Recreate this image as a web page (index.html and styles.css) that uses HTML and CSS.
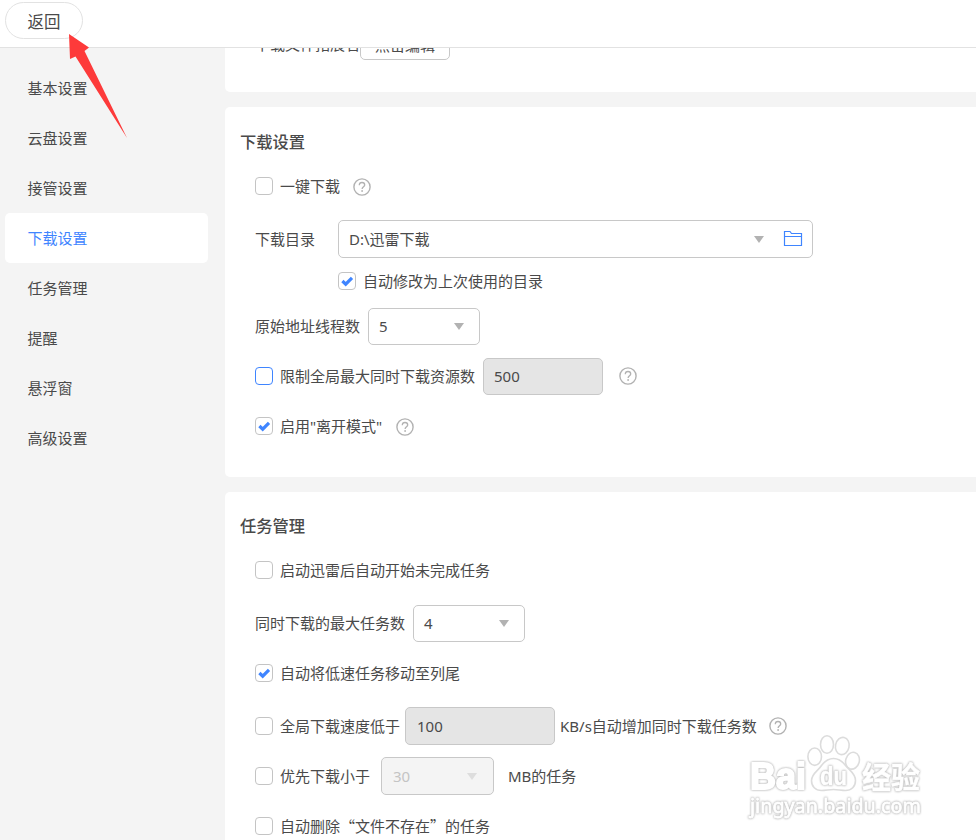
FILE: index.html
```html
<!DOCTYPE html>
<html lang="zh-CN">
<head>
    <meta charset="UTF-8">
    <meta name="viewport" content="width=device-width, initial-scale=1.0">
    <title>下载设置</title>
    <link rel="stylesheet" href="styles.css">
</head>
<body>
    <!-- Shared icons -->
    <svg class="icon-defs">
        <symbol id="help" viewBox="0 0 18 18">
            <circle cx="9" cy="9" r="8.1" fill="none" stroke="#b2b2b2" stroke-width="1.4"/>
            <path d="M6.300 7.300C6.300 5.400 7.400 4.500 9 4.500s2.700.9 2.700 2.400c0 1.700-2.600 1.900-2.600 4" fill="none" stroke="#b2b2b2" stroke-width="1.300"/>
            <circle cx="9.100" cy="13" r=".9" fill="#b2b2b2"/>
        </symbol>
        <symbol id="check" viewBox="0 0 16 16">
            <path d="M3.400 8l3.300 3.200 6.300-6.400" fill="none" stroke="#3f85ff" stroke-width="3.200"/>
        </symbol>
    </svg>

    <header class="header">
        <button class="back">返回</button>
    </header>

    <div class="page">
        <nav class="sidebar">
            <a class="nav-item">基本设置</a>
            <a class="nav-item">云盘设置</a>
            <a class="nav-item">接管设置</a>
            <a class="nav-item active">下载设置</a>
            <a class="nav-item">任务管理</a>
            <a class="nav-item">提醒</a>
            <a class="nav-item">悬浮窗</a>
            <a class="nav-item">高级设置</a>
        </nav>

        <main class="content">
            <section class="card card-scrolled">
                <span>下载文件拓展名</span>
                <button class="edit">点击编辑</button>
            </section>

            <section class="card">
                <h2>下载设置</h2>
                <div class="row row-first">
                    <span class="checkbox"></span>
                    <span class="label">一键下载</span>
                    <svg class="help"><use href="#help"/></svg>
                </div>
                <div class="row row-dir">
                    <span>下载目录</span>
                    <div class="field field-dir">
                        <span>D:\迅雷下载</span>
                        <i class="caret"></i>
                        <svg class="folder" viewBox="0 0 20 18">
                            <path d="M1.500 15.500v-14h5.500l1.500 2h10v12zM1.500 6.500h17" fill="none" stroke="#3f85ff" stroke-width="1.200"/>
                        </svg>
                    </div>
                </div>
                <div class="row row-sub">
                    <span class="checkbox"><svg><use href="#check"/></svg></span>
                    <span class="label">自动修改为上次使用的目录</span>
                </div>
                <div class="row row-threads">
                    <span>原始地址线程数</span>
                    <div class="field select"><span>5</span><i class="caret"></i></div>
                </div>
                <div class="row">
                    <span class="checkbox focus"></span>
                    <span class="label">限制全局最大同时下载资源数</span>
                    <div class="field disabled"><span>500</span></div>
                    <svg class="help help-field"><use href="#help"/></svg>
                </div>
                <div class="row">
                    <span class="checkbox"><svg><use href="#check"/></svg></span>
                    <span class="label">启用"离开模式"</span>
                    <svg class="help help-away"><use href="#help"/></svg>
                </div>
            </section>

            <section class="card card-tasks">
                <h2>任务管理</h2>
                <div class="row row-first">
                    <span class="checkbox"></span>
                    <span class="label">启动迅雷后自动开始未完成任务</span>
                </div>
                <div class="row row-max">
                    <span>同时下载的最大任务数</span>
                    <div class="field select"><span>4</span><i class="caret"></i></div>
                </div>
                <div class="row">
                    <span class="checkbox"><svg><use href="#check"/></svg></span>
                    <span class="label">自动将低速任务移动至列尾</span>
                </div>
                <div class="row row-speed">
                    <span class="checkbox"></span>
                    <span class="label">全局下载速度低于</span>
                    <div class="field disabled field-speed"><span>100</span></div>
                    <span class="unit">KB/s自动增加同时下载任务数</span>
                    <svg class="help help-speed"><use href="#help"/></svg>
                </div>
                <div class="row row-small">
                    <span class="checkbox"></span>
                    <span class="label">优先下载小于</span>
                    <div class="field select muted"><span>30</span><i class="caret"></i></div>
                    <span class="unit unit-mb">MB的任务</span>
                </div>
                <div class="row row-small">
                    <span class="checkbox"></span>
                    <span class="label cjk">自动删除“文件不存在”的任务</span>
                </div>
            </section>
        </main>
    </div>

    <!-- Arrow pointing at the back button -->
    <svg class="arrow" viewBox="0 0 60 106">
        <path d="M1 1L21 14.500 16.500 18 59 105 7.500 23.500 2 26z" fill="#fd3a3a"/>
    </svg>

    <!-- Watermark -->
    <svg class="watermark" viewBox="0 0 186 90">
        <g fill="#fff" stroke="#dcdcdc" stroke-width="1.600">
            <ellipse cx="67.700" cy="21.700" rx="6.800" ry="8.700"/>
            <ellipse cx="80" cy="9.500" rx="6.500" ry="8.700"/>
            <ellipse cx="95.300" cy="11" rx="6.800" ry="8.700" transform="rotate(12 95.300 11)"/>
            <ellipse cx="105.500" cy="25.700" rx="6.800" ry="8.500" transform="rotate(15 105.500 25.700)"/>
            <path d="M86.500 23.500c-5 0-9 3-12 7-3 5-10 8-10 15 0 6 4 10 10 10 4 0 8-1 12-1s8 1 12 1c6 0 10-4 10-10 0-7-6-10-10-15-3-4-7-7-12-7z"/>
        </g>
        <g class="wm-text">
            <text class="wm-baidu" x="3" y="54" textLength="56" lengthAdjust="spacingAndGlyphs">Bai</text>
            <text class="wm-du" x="73" y="50" textLength="27" lengthAdjust="spacingAndGlyphs">du</text>
            <text class="wm-cn" x="115" y="52.500" textLength="58" lengthAdjust="spacingAndGlyphs">经验</text>
            <text class="wm-url" x="3" y="78" textLength="171" lengthAdjust="spacingAndGlyphs">jingyan.baidu.com</text>
        </g>
    </svg>
</body>
</html>
```
FILE: styles.css
```css
/* General Styles */
* {
    box-sizing: border-box;
}

body {
    margin: 0;
    height: 100vh;
    overflow: hidden;
    position: relative;
    display: flex;
    flex-direction: column;
    background: #f4f4f4;
    color: #4a4a4a;
    font-family: "Noto Sans", "Noto Sans CJK SC", sans-serif;
    font-size: 15px;
    line-height: 22px;
}

button {
    font: inherit;
    color: inherit;
    background: #fff;
}

.icon-defs {
    display: none;
}

/* Header */
.header {
    flex: none;
    height: 48px;
    padding: 2px 5px;
    background: #fff;
    border-bottom: 1px solid #e2e2e2;
}

.back {
    display: block;
    width: 78px;
    height: 37px;
    padding: 2px 0 0;
    border: 1px solid #e2e2e2;
    border-radius: 19px;
    font-size: 16.5px;
}

.page {
    flex: 1;
    min-height: 0;
    display: flex;
}

/* Sidebar */
.sidebar {
    flex: none;
    width: 225px;
    padding: 15px 17px 0 5px;
}

.nav-item {
    display: block;
    height: 50px;
    padding-left: 22.5px;
    line-height: 50px;
    border-radius: 5px;
}

.nav-item.active {
    background: #fff;
    color: #3f85ff;
}

/* Cards */
.content {
    flex: 1;
    overflow: hidden;
}

.card {
    margin-bottom: 15px;
    padding: 24px 15px 32px;
    background: #fff;
    border-radius: 5px 0 0 5px;
}

.card-scrolled {
    display: flex;
    align-items: flex-end;
    height: 44px;
    padding: 0 30px 32px;
    border-radius: 0 0 0 5px;
    overflow: hidden;
    line-height: 31px;
}

.edit {
    flex: none;
    width: 90px;
    height: 37px;
    padding: 6px 0 0;
    border: 1px solid #c8c8c8;
    border-radius: 5px;
}

.card-tasks {
    padding-top: 23px;
}

h2 {
    margin: 0 0 15px;
    font-size: 16.3px;
    font-weight: 500;
    line-height: 22px;
}

.row {
    display: flex;
    align-items: center;
    height: 37px;
    margin-top: 13px;
    padding-left: 15px;
    white-space: nowrap;
}

.row span {
    margin-bottom: 1px;
}

.row-first {
    margin-top: 0;
}

.row-dir {
    height: 38px;
    margin-top: 15px;
}

.row-sub {
    margin-top: 5px;
    padding-left: 98px;
}

.row-threads {
    margin-top: 8px;
}

.row-max {
    margin-top: 16px;
}

.row-speed {
    height: 38px;
    margin-top: 15px;
}

.row-small {
    height: 38px;
    margin-top: 12px;
}

/* Form controls */
.checkbox {
    flex: none;
    width: 18px;
    height: 18px;
    border: 1px solid #c4c4c4;
    border-radius: 4px;
}

.checkbox svg {
    display: block;
    width: 16px;
    height: 16px;
}

.checkbox.focus {
    border-color: #3f85ff;
}

.label {
    margin-left: 7px;
}

.cjk {
    font-family: "Noto Sans CJK SC", sans-serif;
}

.field {
    display: flex;
    align-items: center;
    height: 100%;
    margin-left: 8px;
    padding: 0 10px;
    border: 1px solid #c8c8c8;
    border-radius: 5px;
}

.field-dir {
    width: 475px;
    margin-left: 23px;
}

.select {
    width: 112px;
    padding-right: 15px;
}

.disabled {
    width: 120px;
    background: #e5e5e5;
}

.field-speed {
    width: 150px;
    margin-left: 5px;
    padding-left: 11px;
}

.muted {
    width: 113px;
    margin-left: 11px;
    padding-left: 11px;
    padding-right: 16px;
    background: #f4f4f4;
    color: #c4c4c4;
}

.caret {
    margin-left: auto;
    border: 5px solid transparent;
    border-top: 7px solid #b2b2b2;
    border-bottom: 0;
}

.muted .caret {
    border-top-color: #ddd;
}

.folder {
    width: 20px;
    height: 18px;
    margin-left: 19px;
    margin-right: -1px;
}

.help {
    flex: none;
    width: 18px;
    height: 18px;
    margin-left: 13px;
}

.help-field {
    margin-left: 16px;
    margin-bottom: 2px;
}

.help-away {
    margin-left: 14px;
}

.help-speed {
    margin-left: 12px;
}

.unit {
    margin-left: 5px;
}

.unit-mb {
    margin-left: 14px;
}

/* Overlays */
.arrow {
    position: absolute;
    left: 68px;
    top: 33px;
    width: 60px;
    height: 106px;
}

.watermark {
    position: absolute;
    left: 747px;
    top: 735px;
    width: 186px;
    height: 90px;
    overflow: visible;
}

.wm-text {
    fill: #fff;
    stroke: #fff;
    font-family: "Liberation Sans", sans-serif;
    filter: drop-shadow(0 0 0.8px #b8b8b8) drop-shadow(0 0 0.4px #ccc);
}

.wm-baidu {
    font-size: 36px;
    font-weight: bold;
    stroke-width: 2px;
}

.wm-du {
    font-size: 25px;
    font-weight: bold;
    stroke-width: 0.5px;
}

.wm-cn {
    font-family: "Noto Sans CJK SC", sans-serif;
    font-size: 30px;
    font-weight: bold;
    stroke-width: 0.5px;
}

.wm-url {
    font-family: "Noto Sans", sans-serif;
    font-size: 20px;
    stroke-width: 0.8px;
}
```
